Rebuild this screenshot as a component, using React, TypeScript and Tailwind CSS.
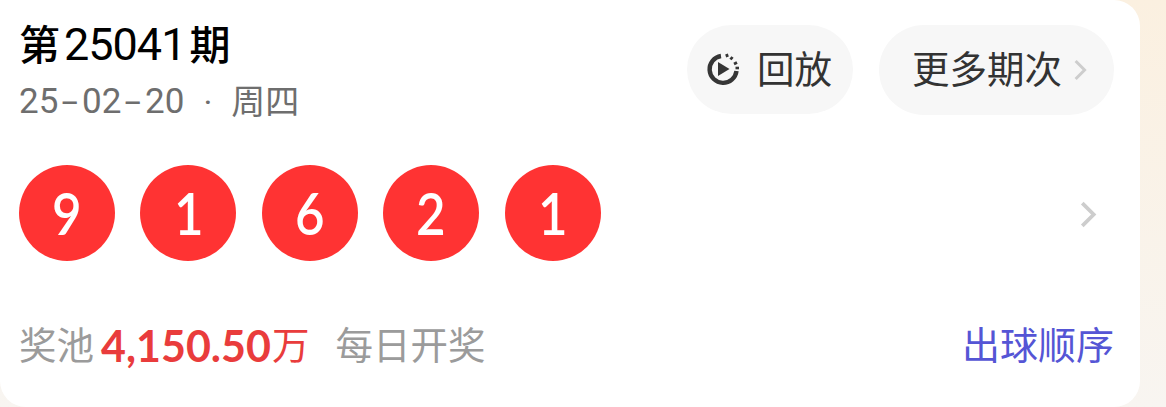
import React from 'react';

const cjk = "font-['Roboto','Noto_Sans_CJK_SC',sans-serif]";
const balls = ['9', '1', '6', '2', '1'];

function Chevron({ className }: { className: string }) {
    return (
        <svg viewBox="0 0 16 26" className={className} fill="none" stroke="#cdcdcd" strokeWidth="3.6">
            <path d="M2 2 L13 13 L2 24" />
        </svg>
    );
}

function ReplayIcon() {
    return (
        <svg viewBox="0 0 34 34" className="w-[34px] h-[34px] -mt-[2px] -ml-[1px]" fill="none">
            <path d="M15 4 A13.5 13.5 0 1 0 30.5 19" stroke="#363636" strokeWidth="4.4" />
            <path d="M20.5 2 L21.5 5 M26.5 5 L24.5 7.5 M31 10.5 L28 12" stroke="#363636" strokeWidth="2.8" />
            <path d="M33 16 L29.5 16" stroke="#363636" strokeWidth="2.6" />
            <path d="M12 10 L23.5 17 L12 24 Z" fill="#363636" />
        </svg>
    );
}

function Dash() {
    return <span className="inline-block scale-x-[1.7] mx-[7px]">-</span>;
}

export default function App() {
    return (
        <div className={`${cjk} w-[1166px] h-[407px] overflow-hidden bg-gradient-to-b from-[#fbf0e0] to-[#f8f5f1]`}>
            <div className="w-[1140px] h-[407px] bg-white rounded-r-[26px] rounded-bl-[26px] rounded-tl-none pl-[19px] pr-[26px] flex flex-col">
                <div className="flex justify-between pt-[25px]">
                    <div>
                        <div className="text-[41px] leading-[44px] font-medium text-black -mt-[2px] whitespace-nowrap">
                            第<span className="text-[45px] tracking-[-1px] ml-[4px] mr-[4px] font-normal">25041</span>期
                        </div>
                        <div className="text-[34px] leading-[44px] text-[#6e6e6e] mt-[12px] flex items-center whitespace-nowrap">
                            <span className="text-[35px]">25<Dash />02<Dash />20</span>
                            <span className="ml-[19px]">·</span>
                            <span className="ml-[19px]">周四</span>
                        </div>
                    </div>
                    <div className="flex gap-[26px] text-[37.5px] text-[#333333]">
                        <div className="w-[166px] h-[89px] rounded-full bg-[#f7f7f7] flex items-center pl-[20px] gap-[17px]">
                            <ReplayIcon />
                            <span className="mt-[1px]">回放</span>
                        </div>
                        <div className="w-[235px] h-[90px] rounded-full bg-[#f7f7f7] flex items-center pl-[33px] gap-[12px]">
                            <span className="mt-[1px]">更多期次</span>
                            <Chevron className="w-[13px] h-[22px] mt-[-1px]" />
                        </div>
                    </div>
                </div>
                <div className="flex items-center justify-between mt-[41px]">
                    <div className="flex gap-[25.4px]">
                        {balls.map((n, i) => (
                            <div key={i} className="w-[96px] h-[96px] rounded-full bg-[#ff3333] text-white flex items-center justify-center font-['Lato',sans-serif] font-semibold text-[58px]">
                                <span className="inline-block scale-x-[0.88] -mt-[2px]">{n}</span>
                            </div>
                        ))}
                    </div>
                    <Chevron className="w-[17px] h-[27px] mr-[17px] mt-[3px]" />
                </div>
                <div className="flex items-center justify-between mt-[60px] text-[37.5px] leading-[50px]">
                    <div className="flex items-center text-[#9b9b9b]">
                        <span>奖池</span>
                        <span className="ml-[7px] text-[#e93c3c] font-['Lato',sans-serif] font-bold text-[43px]">4,150.50</span>
                        <span className="text-[#e93c3c] ml-[1px]">万</span>
                        <span className="ml-[26px]">每日开奖</span>
                    </div>
                    <span className="text-[#5555d5] text-[38px]">出球顺序</span>
                </div>
            </div>
        </div>
    );
}
